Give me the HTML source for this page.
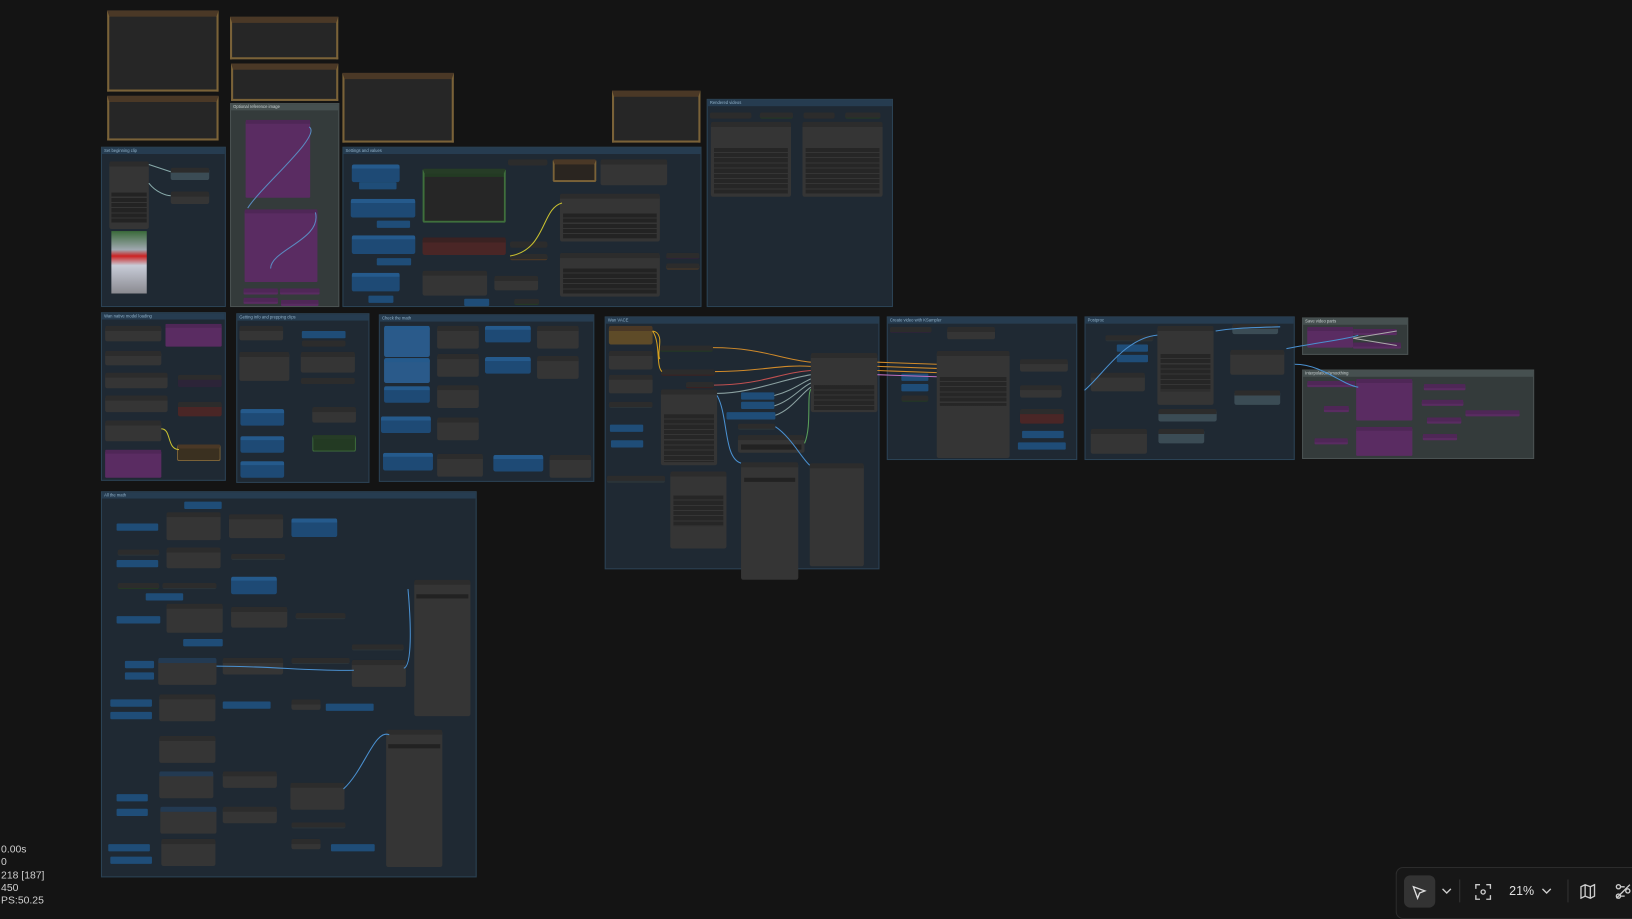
<!DOCTYPE html>
<html><head><meta charset="utf-8">
<style>
html,body{margin:0;padding:0;background:#141414;width:1632px;height:913px;overflow:hidden;font-family:"Liberation Sans",sans-serif}
#w{position:absolute;left:0;top:0;width:1568px;height:877px;transform:scale(1.0408);transform-origin:0 0}
div{box-sizing:border-box}
.g{position:absolute;background:#1f2933;border:1px solid #2b4254}
.g>.h{position:absolute;left:0;top:0;right:0;height:6px;background:#263c50;font-size:4px;color:#8fb0c8;padding-left:2px;line-height:6px;white-space:nowrap;overflow:hidden}
.gg{background:#343b3b;border-color:#4a5252}
.gg>.h{background:#465050;color:#c8d0d0}
.n{position:absolute;background:#353535;border-top:5px solid #2c2c2c;border-radius:2px}
.b{position:absolute;background:#1e4a75;border-top:4px solid #255a8c;border-radius:2px}
.p{position:absolute;background:#5a2c62;border-top:4px solid #4f2757;border-radius:1px}
.bk{position:absolute;background:#262626;border:2px solid #7a6238;border-top:6px solid #4a3826}
.f{position:absolute;background:#222;height:4px}
.sb{position:absolute;background:#1f4d78;height:7px;border-radius:1px}
.st{position:absolute;left:1px;color:#cfcfcf;font-size:10px;line-height:12px}
</style></head><body><div id="w">

<div class="bk" style="left:103px;top:10px;width:107px;height:78px"></div>
<div class="bk" style="left:103px;top:92px;width:107px;height:43px"></div>
<div class="bk" style="left:221px;top:16px;width:104px;height:41px"></div>
<div class="bk" style="left:222px;top:61px;width:103px;height:36px"></div>
<div class="bk" style="left:329px;top:70px;width:107px;height:67px"></div>
<div class="bk" style="left:588px;top:87px;width:85px;height:50px"></div>

<div class="g" style="left:97px;top:141px;width:120px;height:154px"><div class="h">Set beginning clip</div></div>
<div class="g gg" style="left:221px;top:99px;width:105px;height:196px"><div class="h">Optional reference image</div></div>
<div class="g" style="left:329px;top:141px;width:345px;height:154px"><div class="h">Settings and values</div></div>
<div class="g" style="left:679px;top:95px;width:179px;height:200px"><div class="h">Rendered videos</div></div>
<div class="g" style="left:97px;top:300px;width:120px;height:162px"><div class="h">Wan native model loading</div></div>
<div class="g" style="left:227px;top:301px;width:128px;height:163px"><div class="h">Getting info and prepping clips</div></div>
<div class="g" style="left:364px;top:302px;width:207px;height:161px"><div class="h">Check the math</div></div>
<div class="g" style="left:581px;top:304px;width:264px;height:243px"><div class="h">Wan VACE</div></div>
<div class="g" style="left:852px;top:304px;width:183px;height:138px"><div class="h">Create video with KSampler</div></div>
<div class="g" style="left:1042px;top:304px;width:202px;height:138px"><div class="h">Postproc</div></div>
<div class="g gg" style="left:1251px;top:305px;width:102px;height:36px"><div class="h">Save video parts</div></div>
<div class="g gg" style="left:1251px;top:355px;width:223px;height:86px"><div class="h">Interpolation/smoothing</div></div>
<div class="g" style="left:97px;top:472px;width:361px;height:371px"><div class="h">All the math</div></div>

<div class="n" style="left:105px;top:155px;width:38px;height:65px"></div>
<div class="f" style="left:107px;top:185px;width:34px;height:30px;background:repeating-linear-gradient(#232323 0 4px,#353535 4px 5px)"></div>
<div style="position:absolute;left:107px;top:222px;width:34px;height:60px;background:linear-gradient(#3a6a3a,#a0a8b0 30%,#c22 40%,#c8ccd8 55%,#8a8a90)"></div>
<div class="n" style="left:164px;top:161px;width:37px;height:12px;background:#3b4c55"></div>
<div class="n" style="left:164px;top:184px;width:37px;height:12px"></div>

<div class="p" style="left:236px;top:115px;width:62px;height:75px"></div>
<div class="p" style="left:235px;top:201px;width:70px;height:70px"></div>
<div class="p" style="left:234px;top:277px;width:33px;height:6px"></div>
<div class="p" style="left:234px;top:286px;width:33px;height:6px"></div>
<div class="p" style="left:269px;top:277px;width:38px;height:6px"></div>
<div class="p" style="left:270px;top:288px;width:36px;height:6px"></div>

<div class="b" style="left:338px;top:158px;width:46px;height:17px"></div><div class="sb" style="left:345px;top:175px;width:36px"></div>
<div class="b" style="left:337px;top:191px;width:62px;height:18px"></div><div class="sb" style="left:362px;top:212px;width:32px"></div>
<div class="b" style="left:338px;top:226px;width:61px;height:18px"></div><div class="sb" style="left:362px;top:248px;width:33px"></div>
<div class="b" style="left:338px;top:262px;width:46px;height:18px"></div><div class="sb" style="left:354px;top:284px;width:24px"></div>
<div class="n" style="left:406px;top:162px;width:80px;height:52px;background:#233a23;border:2px solid #3f6f3c;border-top:5px solid #263c26"></div>
<div class="f" style="left:408px;top:170px;width:76px;height:42px;background:#262626"></div>
<div class="n" style="left:406px;top:228px;width:80px;height:17px;background:#4a2626;border-top-color:#3a2222"></div>
<div class="n" style="left:406px;top:260px;width:62px;height:24px"></div>
<div class="n" style="left:488px;top:153px;width:38px;height:6px;background:#2c2c2c"></div>
<div class="n" style="left:531px;top:153px;width:42px;height:22px;background:#2a2520;border:2px solid #7a6238;border-top:5px solid #4a3826"></div>
<div class="n" style="left:577px;top:153px;width:64px;height:25px"></div>
<div class="n" style="left:538px;top:186px;width:96px;height:46px"></div>
<div class="f" style="left:541px;top:205px;width:90px;height:24px;background:repeating-linear-gradient(#232323 0 4px,#353535 4px 5px)"></div>
<div class="n" style="left:538px;top:243px;width:96px;height:42px"></div>
<div class="f" style="left:541px;top:258px;width:90px;height:24px;background:repeating-linear-gradient(#232323 0 4px,#353535 4px 5px)"></div>
<div class="n" style="left:475px;top:265px;width:42px;height:14px"></div>
<div class="n" style="left:490px;top:232px;width:36px;height:6px;background:#2c2c2c"></div>
<div class="n" style="left:490px;top:244px;width:36px;height:6px;background:#4a3826"></div>
<div class="n" style="left:640px;top:243px;width:32px;height:6px;background:#2c2438"></div>
<div class="n" style="left:640px;top:253px;width:32px;height:6px;background:#4a3826"></div>
<div class="sb" style="left:446px;top:287px;width:24px"></div>
<div class="n" style="left:494px;top:287px;width:24px;height:6px;background:#253825"></div>

<div class="n" style="left:682px;top:108px;width:40px;height:6px;background:#2c2c2c"></div>
<div class="n" style="left:730px;top:108px;width:32px;height:6px;background:#253825"></div>
<div class="n" style="left:772px;top:108px;width:30px;height:6px;background:#2c2c2c"></div>
<div class="n" style="left:812px;top:108px;width:34px;height:6px;background:#253825"></div>
<div class="n" style="left:683px;top:117px;width:77px;height:72px"></div>
<div class="f" style="left:686px;top:142px;width:71px;height:44px;background:repeating-linear-gradient(#262626 0 4px,#353535 4px 5px)"></div>
<div class="n" style="left:771px;top:117px;width:77px;height:72px"></div>
<div class="f" style="left:774px;top:142px;width:71px;height:44px;background:repeating-linear-gradient(#262626 0 4px,#353535 4px 5px)"></div>

<div class="n" style="left:101px;top:313px;width:54px;height:15px"></div>
<div class="p" style="left:159px;top:311px;width:54px;height:22px"></div>
<div class="n" style="left:101px;top:337px;width:54px;height:14px"></div>
<div class="n" style="left:101px;top:358px;width:60px;height:15px"></div>
<div class="n" style="left:171px;top:360px;width:42px;height:12px;background:#2c2438"></div>
<div class="n" style="left:101px;top:380px;width:60px;height:16px"></div>
<div class="n" style="left:171px;top:386px;width:42px;height:14px;background:#4a2626"></div>
<div class="n" style="left:101px;top:404px;width:54px;height:20px"></div>
<div class="n" style="left:170px;top:427px;width:42px;height:16px;background:#3a3020;border:1px solid #7a6238;border-top:4px solid #4a3826"></div>
<div class="p" style="left:101px;top:432px;width:54px;height:27px"></div>

<div class="n" style="left:230px;top:313px;width:42px;height:14px"></div>
<div class="n" style="left:230px;top:338px;width:48px;height:28px"></div>
<div class="sb" style="left:290px;top:318px;width:42px"></div>
<div class="n" style="left:290px;top:327px;width:42px;height:6px;background:#2c2c2c"></div>
<div class="n" style="left:289px;top:338px;width:52px;height:20px"></div>
<div class="n" style="left:289px;top:363px;width:52px;height:6px;background:#2c2c2c"></div>
<div class="b" style="left:231px;top:393px;width:42px;height:16px"></div>
<div class="b" style="left:231px;top:419px;width:42px;height:16px"></div>
<div class="b" style="left:231px;top:443px;width:42px;height:16px"></div>
<div class="n" style="left:300px;top:391px;width:42px;height:15px"></div>
<div class="n" style="left:300px;top:418px;width:42px;height:16px;background:#233a23;border:1px solid #3f6f3c;border-top:4px solid #263c26"></div>

<div class="b" style="left:369px;top:313px;width:44px;height:30px;background:#2a5a8a"></div>
<div class="b" style="left:369px;top:344px;width:44px;height:24px;background:#2a5a8a"></div>
<div class="b" style="left:369px;top:371px;width:44px;height:16px"></div>
<div class="b" style="left:366px;top:400px;width:48px;height:16px"></div>
<div class="b" style="left:368px;top:435px;width:48px;height:17px"></div>
<div class="n" style="left:420px;top:313px;width:40px;height:22px"></div>
<div class="n" style="left:420px;top:340px;width:40px;height:22px"></div>
<div class="n" style="left:420px;top:370px;width:40px;height:22px"></div>
<div class="n" style="left:420px;top:401px;width:40px;height:22px"></div>
<div class="n" style="left:420px;top:436px;width:44px;height:22px"></div>
<div class="b" style="left:466px;top:313px;width:44px;height:16px"></div>
<div class="b" style="left:466px;top:343px;width:44px;height:16px"></div>
<div class="n" style="left:516px;top:313px;width:40px;height:22px"></div>
<div class="n" style="left:516px;top:342px;width:40px;height:22px"></div>
<div class="b" style="left:474px;top:437px;width:48px;height:16px"></div>
<div class="n" style="left:528px;top:437px;width:40px;height:22px"></div>

<!-- wan vace -->
<div class="n" style="left:585px;top:313px;width:42px;height:18px;background:#5e4b28;border-top-color:#4a3826"></div>
<div class="n" style="left:585px;top:337px;width:42px;height:18px"></div>
<div class="n" style="left:585px;top:360px;width:42px;height:18px"></div>
<div class="n" style="left:634px;top:332px;width:51px;height:6px;background:#243824"></div>
<div class="n" style="left:635px;top:355px;width:52px;height:6px;background:#3a2222"></div>
<div class="n" style="left:659px;top:367px;width:27px;height:6px;background:#3a2222"></div>
<div class="n" style="left:585px;top:386px;width:42px;height:6px;background:#2a3338"></div>
<div class="sb" style="left:586px;top:408px;width:32px"></div>
<div class="sb" style="left:587px;top:423px;width:31px"></div>
<div class="n" style="left:583px;top:457px;width:56px;height:7px;background:#2a3338"></div>
<div class="n" style="left:635px;top:374px;width:54px;height:73px"></div>
<div class="f" style="left:638px;top:398px;width:48px;height:46px;background:repeating-linear-gradient(#262626 0 4px,#353535 4px 5px)"></div>
<div class="n" style="left:644px;top:453px;width:54px;height:74px"></div>
<div class="f" style="left:647px;top:476px;width:48px;height:30px;background:repeating-linear-gradient(#262626 0 4px,#353535 4px 5px)"></div>
<div class="n" style="left:779px;top:339px;width:64px;height:57px"></div>
<div class="f" style="left:782px;top:370px;width:58px;height:24px;background:repeating-linear-gradient(#262626 0 4px,#353535 4px 5px)"></div>
<div class="sb" style="left:712px;top:377px;width:32px"></div>
<div class="sb" style="left:712px;top:386px;width:32px"></div>
<div class="sb" style="left:698px;top:396px;width:47px"></div>
<div class="n" style="left:709px;top:407px;width:36px;height:6px;background:#2a3338"></div>
<div class="n" style="left:709px;top:418px;width:64px;height:17px"></div>
<div class="f" style="left:712px;top:427px;width:58px;height:5px"></div>
<div class="n" style="left:712px;top:444px;width:55px;height:113px"></div>
<div class="f" style="left:715px;top:459px;width:49px;height:4px"></div>
<div class="n" style="left:778px;top:445px;width:52px;height:99px"></div>

<!-- ksampler -->
<div class="n" style="left:855px;top:314px;width:40px;height:6px;background:#2c2438"></div>
<div class="n" style="left:910px;top:314px;width:46px;height:12px"></div>
<div class="n" style="left:900px;top:337px;width:70px;height:103px"></div>
<div class="f" style="left:903px;top:362px;width:64px;height:28px;background:repeating-linear-gradient(#262626 0 4px,#353535 4px 5px)"></div>
<div class="sb" style="left:866px;top:359px;width:26px"></div>
<div class="sb" style="left:866px;top:369px;width:26px"></div>
<div class="n" style="left:866px;top:380px;width:26px;height:6px;background:#243824"></div>
<div class="n" style="left:980px;top:345px;width:46px;height:12px"></div>
<div class="n" style="left:980px;top:370px;width:40px;height:12px"></div>
<div class="n" style="left:980px;top:393px;width:42px;height:14px;background:#4a2626"></div>
<div class="sb" style="left:982px;top:414px;width:40px"></div>
<div class="sb" style="left:978px;top:425px;width:46px"></div>

<!-- postproc -->
<div class="n" style="left:1062px;top:322px;width:46px;height:6px;background:#2a3338"></div>
<div class="sb" style="left:1073px;top:331px;width:30px"></div>
<div class="sb" style="left:1073px;top:341px;width:30px"></div>
<div class="n" style="left:1048px;top:358px;width:52px;height:18px"></div>
<div class="n" style="left:1112px;top:313px;width:54px;height:76px"></div>
<div class="f" style="left:1115px;top:340px;width:48px;height:36px;background:repeating-linear-gradient(#262626 0 4px,#353535 4px 5px)"></div>
<div class="n" style="left:1113px;top:393px;width:56px;height:12px;background:#3b4c55"></div>
<div class="n" style="left:1113px;top:412px;width:44px;height:14px;background:#3b4c55"></div>
<div class="n" style="left:1048px;top:412px;width:54px;height:24px"></div>
<div class="n" style="left:1184px;top:311px;width:44px;height:10px;background:#3b4c55"></div>
<div class="n" style="left:1182px;top:336px;width:52px;height:24px"></div>
<div class="n" style="left:1186px;top:375px;width:44px;height:14px;background:#3b4c55"></div>

<div class="p" style="left:1256px;top:314px;width:44px;height:20px"></div>
<div class="p" style="left:1300px;top:316px;width:42px;height:6px"></div>
<div class="p" style="left:1300px;top:329px;width:46px;height:6px"></div>
<div class="p" style="left:1256px;top:366px;width:46px;height:6px"></div>
<div class="p" style="left:1303px;top:364px;width:54px;height:40px"></div>
<div class="p" style="left:1303px;top:410px;width:54px;height:28px"></div>
<div class="p" style="left:1272px;top:390px;width:24px;height:6px"></div>
<div class="p" style="left:1263px;top:421px;width:32px;height:6px"></div>
<div class="p" style="left:1368px;top:369px;width:40px;height:6px"></div>
<div class="p" style="left:1366px;top:384px;width:40px;height:6px"></div>
<div class="p" style="left:1371px;top:401px;width:33px;height:6px"></div>
<div class="p" style="left:1408px;top:394px;width:52px;height:6px"></div>
<div class="p" style="left:1367px;top:417px;width:33px;height:6px"></div>

<!-- all the math -->
<div class="sb" style="left:177px;top:482px;width:36px"></div>
<div class="sb" style="left:112px;top:503px;width:40px"></div>
<div class="n" style="left:160px;top:492px;width:52px;height:27px"></div>
<div class="n" style="left:220px;top:494px;width:52px;height:23px"></div>
<div class="b" style="left:280px;top:498px;width:44px;height:18px"></div>
<div class="n" style="left:113px;top:528px;width:40px;height:6px;background:#2a3338"></div>
<div class="sb" style="left:112px;top:538px;width:40px"></div>
<div class="n" style="left:160px;top:526px;width:52px;height:20px"></div>
<div class="n" style="left:222px;top:532px;width:52px;height:6px;background:#2a3338"></div>
<div class="n" style="left:113px;top:560px;width:40px;height:6px;background:#243824"></div>
<div class="sb" style="left:140px;top:570px;width:36px"></div>
<div class="n" style="left:156px;top:560px;width:52px;height:6px;background:#2a3338"></div>
<div class="b" style="left:222px;top:554px;width:44px;height:17px"></div>
<div class="n" style="left:160px;top:580px;width:54px;height:28px"></div>
<div class="n" style="left:222px;top:583px;width:54px;height:20px"></div>
<div class="sb" style="left:112px;top:592px;width:42px"></div>
<div class="n" style="left:284px;top:589px;width:48px;height:6px;background:#2a3338"></div>
<div class="sb" style="left:176px;top:614px;width:38px"></div>
<div class="n" style="left:338px;top:619px;width:50px;height:6px;background:#2a3338"></div>
<div class="n" style="left:398px;top:557px;width:54px;height:131px"></div>
<div class="f" style="left:400px;top:571px;width:50px;height:4px"></div>
<div class="sb" style="left:120px;top:635px;width:28px"></div>
<div class="sb" style="left:120px;top:646px;width:28px"></div>
<div class="n" style="left:152px;top:632px;width:56px;height:26px;border-top-color:#233a52"></div>
<div class="n" style="left:214px;top:632px;width:58px;height:16px"></div>
<div class="n" style="left:280px;top:632px;width:56px;height:6px;background:#2a3338"></div>
<div class="n" style="left:338px;top:634px;width:52px;height:26px"></div>
<div class="sb" style="left:106px;top:672px;width:40px"></div>
<div class="sb" style="left:106px;top:684px;width:40px"></div>
<div class="n" style="left:153px;top:667px;width:54px;height:26px"></div>
<div class="sb" style="left:214px;top:674px;width:46px"></div>
<div class="n" style="left:280px;top:672px;width:28px;height:10px"></div>
<div class="sb" style="left:313px;top:676px;width:46px"></div>
<div class="n" style="left:153px;top:707px;width:54px;height:26px"></div>
<div class="n" style="left:153px;top:741px;width:52px;height:26px;border-top-color:#233a52"></div>
<div class="n" style="left:214px;top:741px;width:52px;height:16px"></div>
<div class="n" style="left:279px;top:752px;width:52px;height:26px"></div>
<div class="sb" style="left:112px;top:763px;width:30px"></div>
<div class="sb" style="left:112px;top:777px;width:30px"></div>
<div class="n" style="left:154px;top:775px;width:54px;height:26px;border-top-color:#233a52"></div>
<div class="n" style="left:214px;top:775px;width:52px;height:16px"></div>
<div class="n" style="left:280px;top:790px;width:52px;height:6px;background:#2a3338"></div>
<div class="sb" style="left:104px;top:811px;width:40px"></div>
<div class="sb" style="left:106px;top:823px;width:40px"></div>
<div class="n" style="left:155px;top:806px;width:52px;height:26px"></div>
<div class="n" style="left:280px;top:806px;width:28px;height:10px"></div>
<div class="sb" style="left:318px;top:811px;width:42px"></div>
<div class="n" style="left:371px;top:701px;width:54px;height:132px"></div>
<div class="f" style="left:373px;top:715px;width:50px;height:4px"></div>

<svg style="position:absolute;left:0;top:0" width="1568" height="877" fill="none" stroke-width="1">
<path d="M297 122 C310 130 250 180 238 200" stroke="#5a8ac0"/>
<path d="M303 204 C310 230 260 240 260 258" stroke="#5a8ac0"/>
<path d="M143 158 L164 165 M143 176 C150 185 160 188 164 188" stroke="#8aa"/>
<path d="M627 318 C640 320 630 340 634 345 M627 318 C635 330 630 352 636 357" stroke="#d4a020"/>
<path d="M685 334 C730 334 750 345 779 348 M687 357 C730 357 750 350 779 352" stroke="#d08a2a"/>
<path d="M686 370 C730 370 750 358 779 356" stroke="#c05050"/>
<path d="M689 378 C720 378 750 365 779 360 M744 380 C760 376 770 368 779 364 M744 390 C760 385 770 372 779 368 M745 399 C760 394 770 378 779 372" stroke="#8aa0a0"/>
<path d="M689 380 C700 400 695 440 712 445 M745 410 C760 420 770 440 778 447" stroke="#4a90d0"/>
<path d="M773 426 C780 410 775 380 779 374" stroke="#5aa05a"/>
<path d="M843 348 L900 350 M843 352 L900 354 M843 356 L900 358" stroke="#d08a2a"/>
<path d="M843 360 L900 362" stroke="#c070c0"/>
<path d="M1300 325 L1342 318 M1300 325 L1342 332" stroke="#aaa"/>
<path d="M1236 335 C1260 330 1300 325 1305 322" stroke="#4a90d0"/>
<path d="M1244 350 C1270 350 1290 370 1305 372" stroke="#4a90d0"/>
<path d="M392 566 C395 600 396 640 388 642 M374 706 C360 700 350 740 330 758" stroke="#4a90d0"/>
<path d="M208 640 C260 640 300 645 340 644" stroke="#4a90d0"/>
<path d="M1042 375 C1060 360 1080 325 1112 322 M1168 318 C1180 316 1190 315 1230 314" stroke="#4a90d0"/>
<path d="M540 195 C520 200 525 240 490 246" stroke="#c8c030"/>
<path d="M155 412 C165 412 160 432 172 432" stroke="#c8c030"/>
</svg>

<div class="st" style="top:811px">0.00s</div>
<div class="st" style="top:823px">0</div>
<div class="st" style="top:836px">218 [187]</div>
<div class="st" style="top:848px">450</div>
<div class="st" style="top:860px">PS:50.25</div>

<div style="position:absolute;left:1341px;top:833px;width:240px;height:50px;background:#171717;border:1px solid #2c2c2c;border-radius:7px"></div>
<div style="position:absolute;left:1349px;top:841px;width:30px;height:31px;background:#333;border-radius:6px"></div>
<svg style="position:absolute;left:1355px;top:849px" width="16" height="16" fill="none" stroke="#ddd" stroke-width="1.3"><path d="M3 3 L14 7 L9 9 L7 14 Z"/></svg>
<svg style="position:absolute;left:1385px;top:852px" width="10" height="8" fill="none" stroke="#ccc" stroke-width="1.3"><path d="M1 2 L5 6 L9 2"/></svg>
<div style="position:absolute;left:1402px;top:845px;width:1px;height:22px;background:#333"></div>
<svg style="position:absolute;left:1417px;top:849px" width="16" height="16" fill="none" stroke="#ccc" stroke-width="1.3"><path d="M1 5V1H5 M11 1H15V5 M15 11V15H11 M5 15H1V11"/><circle cx="8" cy="8" r="2"/></svg>
<div style="position:absolute;left:1450px;top:849px;color:#e0e0e0;font-size:12px">21%</div>
<svg style="position:absolute;left:1481px;top:852px" width="10" height="8" fill="none" stroke="#ccc" stroke-width="1.3"><path d="M1 2 L5 6 L9 2"/></svg>
<div style="position:absolute;left:1506px;top:845px;width:1px;height:22px;background:#333"></div>
<svg style="position:absolute;left:1518px;top:849px" width="15" height="15" fill="none" stroke="#ccc" stroke-width="1.3"><path d="M1 3 L5 1 L10 3 L14 1 V12 L10 14 L5 12 L1 14 Z M5 1V12 M10 3V14"/></svg>
<svg style="position:absolute;left:1551px;top:848px" width="17" height="17" fill="none" stroke="#ccc" stroke-width="1.3"><circle cx="4" cy="4" r="2"/><circle cx="4" cy="13" r="2"/><circle cx="13" cy="8" r="2"/><path d="M6 4H10 M6 13H10 M2 15L15 2"/></svg>

</div></body></html>
